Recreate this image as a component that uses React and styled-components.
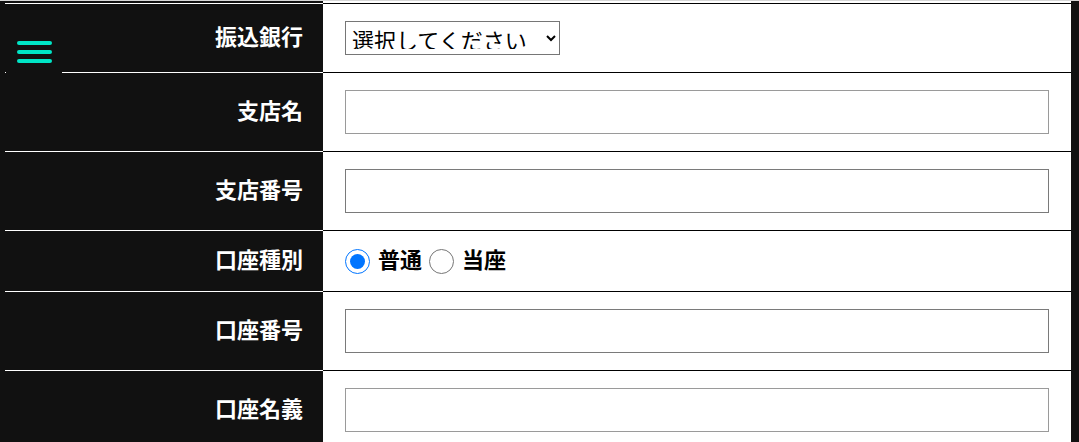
import styled, { createGlobalStyle } from "styled-components";

const GlobalStyle = createGlobalStyle`
  html, body {
    margin: 0;
    padding: 0;
    background-color: #111111;
    overflow: hidden;
  }

  body {
    font-family: "Noto Sans CJK JP", "Noto Sans", sans-serif;
  }
`;

const Page = styled.div`
  border-top: 1px solid #d6d6d6;
  padding: 0 8px 0 5px;
`;

const Form = styled.form`
  display: flex;
  flex-direction: column;
`;

const Row = styled.div`
  display: grid;
  grid-template-columns: 318px 1fr;
`;

const LabelCell = styled.div`
  display: flex;
  align-items: center;
  justify-content: flex-end;
  padding: ${(p) => (p.$tail ? "0" : "0 20px 7px 0")};
  background-color: #111111;
  border-top: ${(p) => (p.$tail ? "none" : "1px solid #ffffff")};
  height: ${(p) => (p.$tail ? "2px" : "auto")};
  color: #ffffff;
  font-size: 22px;
  font-weight: 700;
  line-height: 1;
`;

const FieldCell = styled.div`
  display: flex;
  align-items: center;
  padding: ${(p) => (p.$tail ? "0" : "17px 22px")};
  background-color: #ffffff;
  border-top: ${(p) => (p.$tail ? "none" : "1px solid #000000")};
  height: ${(p) => (p.$tail ? "2px" : "auto")};
  box-sizing: border-box;
`;

const Select = styled.select`
  width: 215px;
  height: 34px;
  box-sizing: border-box;
  font-family: "Noto Sans CJK JP", sans-serif;
  font-size: 22px;
  color: #000000;
  background-color: #ffffff;
  border: 1px solid #767676;
  border-radius: 0;
  padding: 0 2px 5px;
`;

const TextInput = styled.input`
  width: 100%;
  height: 44px;
  box-sizing: border-box;
  border: 1px solid ${(p) => (p.$dark ? "#7a7a7a" : "#9a9a9a")};
  border-radius: 0;
  font-size: 20px;
  font-family: "Noto Sans CJK JP", sans-serif;
  padding: 0 6px;
  margin: 0;
`;

const RadioGroup = styled.div`
  display: flex;
  align-items: center;
  gap: 7px;
  height: 26px;
`;

const RadioLabel = styled.label`
  display: inline-flex;
  align-items: center;
  gap: 8px;
  font-size: 22px;
  font-weight: 700;
  line-height: 1;
  color: #000000;
`;

const RadioText = styled.span`
  padding-bottom: 6px;
`;

const Radio = styled.input`
  width: 25px;
  height: 25px;
  margin: 0;
`;

const MenuButton = styled.button`
  position: fixed;
  top: 24px;
  left: 6px;
  width: 56px;
  height: 56px;
  padding: 0;
  border: none;
  background-color: #111111;
  display: flex;
  flex-direction: column;
  align-items: center;
  justify-content: center;
  gap: 5px;
  cursor: pointer;
`;

const MenuBar = styled.span`
  display: block;
  width: 35px;
  height: 4px;
  border-radius: 2px;
  background-color: #00e5c6;
`;

const textRows = [
  { label: "支店名", name: "branch" },
  { label: "支店番号", name: "branchNo", dark: true },
];

const lowerRows = [
  { label: "口座番号", name: "accountNo", dark: true },
  { label: "口座名義", name: "accountName" },
];

function App() {
  return (
    <>
      <GlobalStyle />
      <Page>
        <Form>
          <Row>
            <LabelCell $tail />
            <FieldCell $tail />
          </Row>

          <Row>
            <LabelCell>振込銀行</LabelCell>
            <FieldCell>
              <Select defaultValue="">
                <option value="">選択してください</option>
              </Select>
            </FieldCell>
          </Row>

          {textRows.map((row) => (
            <Row key={row.name}>
              <LabelCell>{row.label}</LabelCell>
              <FieldCell>
                <TextInput type="text" name={row.name} $dark={row.dark} />
              </FieldCell>
            </Row>
          ))}

          <Row>
            <LabelCell>口座種別</LabelCell>
            <FieldCell>
              <RadioGroup>
                <RadioLabel>
                  <Radio type="radio" name="type" defaultChecked />
                  <RadioText>普通</RadioText>
                </RadioLabel>
                <RadioLabel>
                  <Radio type="radio" name="type" />
                  <RadioText>当座</RadioText>
                </RadioLabel>
              </RadioGroup>
            </FieldCell>
          </Row>

          {lowerRows.map((row) => (
            <Row key={row.name}>
              <LabelCell>{row.label}</LabelCell>
              <FieldCell>
                <TextInput type="text" name={row.name} $dark={row.dark} />
              </FieldCell>
            </Row>
          ))}
        </Form>
      </Page>

      <MenuButton type="button" aria-label="menu">
        <MenuBar />
        <MenuBar />
        <MenuBar />
      </MenuButton>
    </>
  );
}

export default App;
